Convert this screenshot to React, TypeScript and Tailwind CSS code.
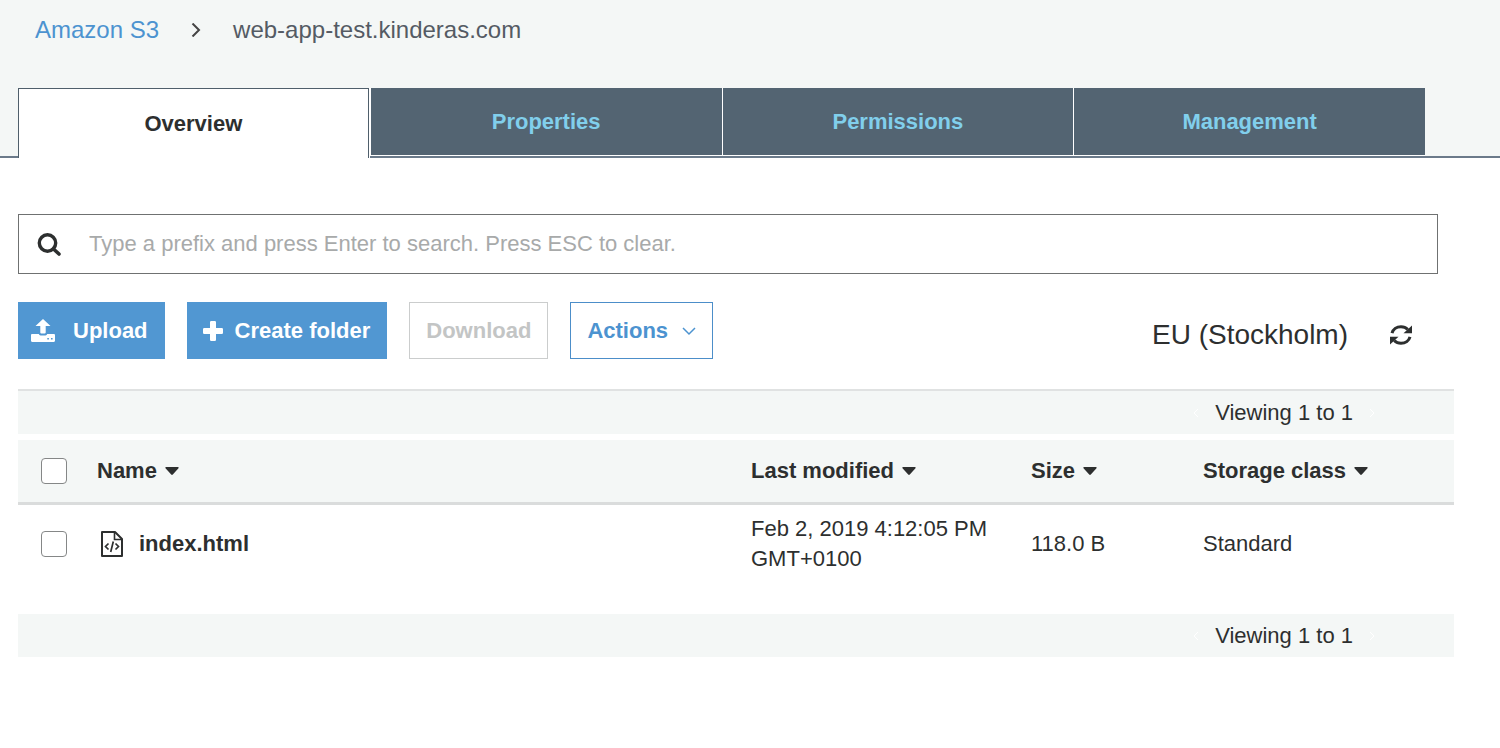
import React from "react";

const tabs = ["Overview", "Properties", "Permissions", "Management"];

const columns = [
  { label: "Name", width: "w-[654px]" },
  { label: "Last modified", width: "w-[280px]" },
  { label: "Size", width: "w-[172px]" },
  { label: "Storage class", width: "" },
];

const objects = [
  {
    name: "index.html",
    modified: "Feb 2, 2019 4:12:05 PM GMT+0100",
    size: "118.0 B",
    storage: "Standard",
  },
];

function SearchIcon() {
  return (
    <svg viewBox="0 0 24 24" className="w-6 h-6 shrink-0" fill="none" stroke="#2d2f2f">
      <circle cx="10.5" cy="11" r="8.2" strokeWidth="3.4" />
      <path d="M16.500 17l5.500 5" strokeWidth="3.600" strokeLinecap="round" />
    </svg>
  );
}

function UploadIcon() {
  return (
    <svg viewBox="0 0 24 23" className="w-6 h-[23px] shrink-0" fill="currentColor">
      <path d="M12 0l7.500 7h-4.800v6.500q0 1-1 1h-3.400q-1 0-1-1v-6.500h-4.800z" />
      <path
        fillRule="evenodd"
        d="M1.200 15h6.600c0.500 1.200 1.500 1.500 2.600 1.500h3.200c1.100 0 2.100-0.300 2.600-1.500h6.600c0.700 0 1.200 0.500 1.200 1.200v5.600c0 0.700-0.500 1.200-1.200 1.200h-21.600c-0.700 0-1.200-0.500-1.200-1.200v-5.600c0-0.700 0.500-1.200 1.200-1.200zM16.300 19v1.600h1.600v-1.600zM20 19v1.600h1.600v-1.600z"
      />
    </svg>
  );
}

function PlusIcon() {
  return (
    <svg viewBox="0 0 20 20" className="w-5 h-5 shrink-0" fill="currentColor">
      <path d="M8.200 0h3.600q1.200 0 1.200 1.200v5.800h5.800q1.200 0 1.200 1.200v3.600q0 1.200-1.200 1.200h-5.800v5.800q0 1.200-1.200 1.200h-3.600q-1.200 0-1.200-1.200v-5.800h-5.800q-1.200 0-1.200-1.200v-3.600q0-1.200 1.200-1.200h5.800v-5.800q0-1.200 1.200-1.200z" />
    </svg>
  );
}

function RefreshIcon() {
  return (
    <svg viewBox="0 0 22 22" className="w-[22px] h-[22px]" fill="none" stroke="#2d2f2f" strokeWidth="3">
      <path d="M2 9.200c1-3.800 4.600-6.500 9-6.500 2.700 0 5 1 6.800 2.800" />
      <path d="M20 12.800c-1 3.800-4.600 6.500-9 6.500-2.700 0-5-1-6.800-2.800" />
      <path d="M22 1.500v7.700h-8.500z" fill="#2d2f2f" stroke="none" />
      <path d="M0 20.500v-7.700h8.500z" fill="#2d2f2f" stroke="none" />
    </svg>
  );
}

function FileIcon() {
  return (
    <svg viewBox="0 0 22 26" className="w-[22px] h-[26px] shrink-0" fill="none" stroke="#2d2f2f">
      <path d="M1 1h13l7 7v17h-20z" strokeWidth="2" strokeLinejoin="round" />
      <path d="M13.500 1.500v7h7" strokeWidth="1.600" />
      <path d="M7.500 12.500l-3 3 3 3M14.500 12.500l3 3-3 3M12.300 10.500l-2.600 10.500" strokeWidth="1.700" />
    </svg>
  );
}

function Caret() {
  return (
    <svg viewBox="0 0 14 8" className="w-[14px] h-2" fill="currentColor">
      <path d="M1 0h12q1 0.300 0.500 1.200l-5.700 6.300q-0.800 0.800-1.600 0l-5.700-6.300q-0.500-0.900 0.500-1.200z" />
    </svg>
  );
}

function Chevron({ d, className }: { d: string; className: string }) {
  return (
    <svg viewBox="0 0 14 14" className={className} fill="none" stroke="currentColor">
      <path d={d} />
    </svg>
  );
}

function Pager({ className = "" }: { className?: string }) {
  return (
    <div className={`flex items-center justify-end gap-3 bg-[#f4f7f6] pr-[75px] ${className}`}>
      <button aria-label="Previous page" className="text-white">
        <Chevron d="M9 3l-4 4 4 4" className="w-[14px] h-[14px]" />
      </button>
      <span>Viewing 1 to 1</span>
      <button aria-label="Next page" className="text-white">
        <Chevron d="M5 3l4 4-4 4" className="w-[14px] h-[14px]" />
      </button>
    </div>
  );
}

function Checkbox({ label }: { label: string }) {
  return (
    <input
      type="checkbox"
      aria-label={label}
      className="block w-[26px] h-[26px] appearance-none rounded-[4px] border border-[#858787] bg-white"
    />
  );
}

export default function App() {
  return (
    <div className="min-h-screen bg-white font-['Liberation_Sans',Arial,sans-serif] text-[22px] leading-[30px] text-[#2d2f2f]">
      <header className="bg-[#f4f7f6]">
        <nav aria-label="Breadcrumb" className="flex items-center h-[60px] px-[35px] text-2xl">
          <a href="#" className="text-[#4c93d0]">
            Amazon S3
          </a>
          <Chevron d="M3.500 0.500l6.500 6.500-6.500 6.500" className="w-[14px] h-[14px] mx-[30px] stroke-2 text-[#444]" />
          <span className="text-[#545b64]">web-app-test.kinderas.com</span>
        </nav>

        <div className="flex pt-7">
          <div className="w-[18px] border-b-2 border-[#6b7a8a]" />
          <div role="tablist" className="flex-1 grid grid-cols-4">
            {tabs.map((tab, index) =>
              index === 0 ? (
                <div key={tab} className="flex pr-px bg-white">
                  <button
                    role="tab"
                    aria-selected="true"
                    className="h-[70px] flex-1 border border-b-0 border-[#4f5f6b] font-bold"
                  >
                    {tab}
                  </button>
                </div>
              ) : (
                <div key={tab} className="pl-px border-b-2 border-[#6b7a8a] bg-white">
                  <button
                    role="tab"
                    aria-selected="false"
                    className="block h-[67px] w-full bg-[#536472] font-bold text-[#81cfec]"
                  >
                    {tab}
                  </button>
                </div>
              )
            )}
          </div>
          <div className="w-[75px] border-b-2 border-[#6b7a8a]" />
        </div>
      </header>

      <main className="pl-[18px] pr-[46px] pt-14">
        <label className="mr-4 flex items-center gap-7 h-[60px] px-[18px] border border-[#6f7171]">
          <SearchIcon />
          <input
            type="text"
            aria-label="Search by prefix"
            placeholder="Type a prefix and press Enter to search. Press ESC to clear."
            className="flex-1 outline-none placeholder:text-[#a8aaaa]"
          />
        </label>

        <div className="flex items-center justify-between mt-7">
          <div className="flex gap-[22px] font-bold">
            <button className="flex items-center gap-[18px] h-[57px] pl-[13px] pr-[17px] bg-[#5197d2] text-white">
              <UploadIcon />
              Upload
            </button>
            <button className="flex items-center gap-3 h-[57px] pl-4 pr-[17px] bg-[#5197d2] text-white">
              <PlusIcon />
              Create folder
            </button>
            <button disabled className="h-[57px] px-4 border border-[#cbcdcd] text-[#c3c5c5]">
              Download
            </button>
            <button className="flex items-center gap-[14px] h-[57px] px-4 border border-[#4c8ec9] text-[#4c93d0]">
              Actions
              <Chevron d="M1 4l6 6 6-6" className="w-[14px] h-[14px] stroke-[1.5]" />
            </button>
          </div>
          <div className="flex items-center gap-[42px] pr-[42px] pt-2 text-[28px]">
            <span>EU (Stockholm)</span>
            <button aria-label="Refresh">
              <RefreshIcon />
            </button>
          </div>
        </div>

        <Pager className="mt-[30px] h-[45px] border-t-2 border-[#e0e2e2]" />

        <table className="mt-[6px] w-full table-fixed text-left">
          <thead>
            <tr className="h-[63px] bg-[#f4f7f6] border-b-3 border-[#dadcdc]">
              <th className="w-[79px] pl-[23px]">
                <Checkbox label="Select all objects" />
              </th>
              {columns.map((column) => (
                <th key={column.label} className={column.width}>
                  <button className="flex items-center gap-2 font-bold">
                    {column.label}
                    <Caret />
                  </button>
                </th>
              ))}
            </tr>
          </thead>
          <tbody>
            {objects.map((object) => (
              <tr key={object.name} className="h-20">
                <td className="pl-[23px]">
                  <Checkbox label={`Select ${object.name}`} />
                </td>
                <td>
                  <a href="#" className="flex items-center gap-4 pl-1 font-bold">
                    <FileIcon />
                    {object.name}
                  </a>
                </td>
                <td className="pr-8">{object.modified}</td>
                <td>{object.size}</td>
                <td>{object.storage}</td>
              </tr>
            ))}
          </tbody>
        </table>

        <Pager className="mt-[31px] h-[43px]" />
      </main>
    </div>
  );
}
